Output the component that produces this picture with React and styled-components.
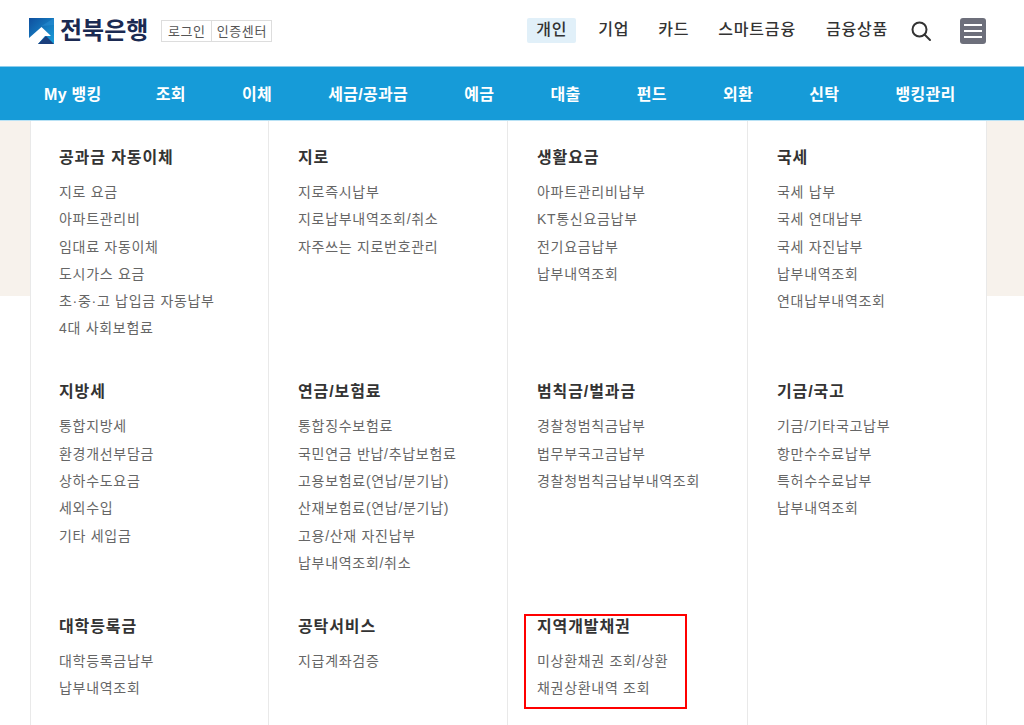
import React from 'react';
import styled, { createGlobalStyle } from 'styled-components';

const GlobalStyle = createGlobalStyle`
    html, body {
        margin: 0;
        padding: 0;
        background: #fff;
    }
    body {
        font-family: "Liberation Sans", "Noto Sans CJK KR", sans-serif;
        overflow: hidden;
    }
    ul {
        list-style: none;
        margin: 0;
        padding: 0;
    }
`;

const Page = styled.div`
    position: relative;
    width: 1024px;
    height: 725px;
    overflow: hidden;
`;
const Header = styled.header`
    display: flex;
    align-items: center;
    height: 67px;
    padding: 0 38px 6px 29px;
    box-sizing: border-box;
`;
const Logo = styled.div`
    display: flex;
    align-items: center;
    gap: 6px;
`;
const LogoText = styled.span`
    font-size: 24px;
    font-weight: 700;
    line-height: 26px;
    color: #1b2a52;
`;
const AuthBox = styled.div`
    display: flex;
    height: 22px;
    margin-left: 13px;
    border: 1px solid #ddd;
    box-sizing: border-box;
`;
const AuthLink = styled.a`
    display: flex;
    align-items: center;
    justify-content: center;
    width: ${p => p.$width}px;
    font-size: 13px;
    letter-spacing: 0.6px;
    color: #555;
    & + & {
        border-left: 1px solid #ddd;
    }
`;
const TopMenu = styled.nav`
    display: flex;
    align-items: center;
    margin-left: auto;
`;
const TopLink = styled.a`
    display: block;
    margin-right: ${p => p.$gap}px;
    padding: 0 ${p => (p.$active ? 9 : 10)}px;
    height: 25px;
    line-height: 24px;
    border-radius: 2px;
    font-size: 16px;
    font-weight: 500;
    color: #333;
    letter-spacing: 0.8px;
    white-space: nowrap;
    background: ${p => (p.$active ? '#e1f0f9' : 'transparent')};
`;
const IconButton = styled.button`
    display: flex;
    align-items: center;
    justify-content: center;
    padding: 0;
    border: 0;
    background: none;
`;
const MenuButton = styled(IconButton)`
    width: 26px;
    height: 26px;
    margin-left: 28px;
    border-radius: 3px;
    background: #6d6f7b;
`;
const MainNav = styled.nav`
    position: relative;
    z-index: 1;
    display: flex;
    align-items: center;
    gap: 56.2px;
    height: 53px;
    padding: 0 0 2px 44px;
    box-sizing: border-box;
    background: #169bd8;
    box-shadow: 0 -1px 0 #8ccded, 0 1px 0 #b9e2f5;
`;
const MainLink = styled.a`
    font-size: 16px;
    font-weight: 700;
    color: #fff;
    letter-spacing: 0.3px;
    white-space: nowrap;
    &:first-child {
        margin-right: -2px;
    }
`;
const Band = styled.div`
    height: 176px;
    background: #f7f2ec;
`;
const Dropdown = styled.div`
    position: absolute;
    top: 120px;
    left: 30px;
    width: 957px;
    height: 605px;
    display: grid;
    grid-template-columns: 237px 239px 240px 239px;
    grid-auto-rows: 234.4px;
    background: #fff;
    border-left: 1px solid #e9e9e9;
    border-right: 1px solid #e9e9e9;
    box-sizing: border-box;
`;
const Group = styled.section`
    padding: 27px 0 0 ${p => (p.$first ? '28px' : '29px')};
    border-left: ${p => (p.$first ? '0' : '1px solid #e9e9e9')};
`;
const GroupTitle = styled.h3`
    margin: 0 0 10px;
    font-size: 16px;
    font-weight: 700;
    line-height: 22px;
    color: #333;
    letter-spacing: 0.9px;
`;
const GroupItem = styled.li`
    height: 27.3px;
    line-height: 27.3px;
    font-size: 14px;
    color: #666;
    letter-spacing: 0.7px;
    white-space: nowrap;
`;
const Highlight = styled.div`
    position: absolute;
    top: 614px;
    left: 524px;
    width: 163px;
    height: 95px;
    border: 2px solid #f00;
    box-sizing: border-box;
`;

const topLinks = [
    { label: '개인', active: true, gap: 12 },
    { label: '기업', gap: 9 },
    { label: '카드', gap: 9 },
    { label: '스마트금융', gap: 10 },
    { label: '금융상품', gap: 12 },
];
const mainLinks = ['My 뱅킹', '조회', '이체', '세금/공과금', '예금', '대출', '펀드', '외환', '신탁', '뱅킹관리'];
const groups = [
    { title: '공과금 자동이체', items: ['지로 요금', '아파트관리비', '임대료 자동이체', '도시가스 요금', '초·중·고 납입금 자동납부', '4대 사회보험료'] },
    { title: '지로', items: ['지로즉시납부', '지로납부내역조회/취소', '자주쓰는 지로번호관리'] },
    { title: '생활요금', items: ['아파트관리비납부', 'KT통신요금납부', '전기요금납부', '납부내역조회'] },
    { title: '국세', items: ['국세 납부', '국세 연대납부', '국세 자진납부', '납부내역조회', '연대납부내역조회'] },
    { title: '지방세', items: ['통합지방세', '환경개선부담금', '상하수도요금', '세외수입', '기타 세입금'] },
    { title: '연금/보험료', items: ['통합징수보험료', '국민연금 반납/추납보험료', '고용보험료(연납/분기납)', '산재보험료(연납/분기납)', '고용/산재 자진납부', '납부내역조회/취소'] },
    { title: '범칙금/벌과금', items: ['경찰청범칙금납부', '법무부국고금납부', '경찰청범칙금납부내역조회'] },
    { title: '기금/국고', items: ['기금/기타국고납부', '항만수수료납부', '특허수수료납부', '납부내역조회'] },
    { title: '대학등록금', items: ['대학등록금납부', '납부내역조회'] },
    { title: '공탁서비스', items: ['지급계좌검증'] },
    { title: '지역개발채권', items: ['미상환채권 조회/상환', '채권상환내역 조회'] },
    { title: '', items: [] },
];

function LogoMark() {
    return (
        <svg width="25" height="26" viewBox="0 0 25 26" aria-hidden="true">
            <defs>
                <linearGradient id="logoBlue" x1="0" y1="0" x2="1" y2="1">
                    <stop offset="0" stopColor="#0f4f9e" />
                    <stop offset="1" stopColor="#1aa0dc" />
                </linearGradient>
            </defs>
            <rect width="25" height="26" fill="url(#logoBlue)" />
            <path d="M0 19 L12.5 8 L25 0 V7 L12.5 8 Z" fill="#2c8fd6" opacity="0.5" />
            <path d="M0 26 V20 L12.5 9 L22 18 L16 18 L9 26 Z" fill="#fff" />
            <path d="M9 26 L17 18 L25 26 Z" fill="#1b3f7d" />
        </svg>
    );
}

function App() {
    return (
        <Page>
            <GlobalStyle />
            <Header>
                <Logo>
                    <LogoMark />
                    <LogoText>전북은행</LogoText>
                </Logo>
                <AuthBox>
                    <AuthLink $width={49}>로그인</AuthLink>
                    <AuthLink $width={59}>인증센터</AuthLink>
                </AuthBox>
                <TopMenu>
                    {topLinks.map(link => (
                        <TopLink key={link.label} $active={link.active} $gap={link.gap}>{link.label}</TopLink>
                    ))}
                    <IconButton aria-label="검색">
                        <svg width="22" height="22" viewBox="0 0 22 22" fill="none" stroke="#333" strokeWidth="2">
                            <circle cx="9.5" cy="9.5" r="7" />
                            <path d="M14.5 14.5 L20 20" strokeLinecap="round" />
                        </svg>
                    </IconButton>
                    <MenuButton aria-label="메뉴">
                        <svg width="18" height="14" viewBox="0 0 18 14" fill="#fff">
                            <rect y="0" width="18" height="2" />
                            <rect y="6" width="18" height="2" />
                            <rect y="12" width="18" height="2" />
                        </svg>
                    </MenuButton>
                </TopMenu>
            </Header>
            <MainNav>
                {mainLinks.map(link => <MainLink key={link}>{link}</MainLink>)}
            </MainNav>
            <Band />
            <Dropdown>
                {groups.map((group, i) => (
                    <Group key={group.title || i} $first={i % 4 === 0}>
                        {group.title && <GroupTitle>{group.title}</GroupTitle>}
                        <ul>
                            {group.items.map(item => <GroupItem key={item}>{item}</GroupItem>)}
                        </ul>
                    </Group>
                ))}
            </Dropdown>
            <Highlight />
        </Page>
    );
}

export default App;
